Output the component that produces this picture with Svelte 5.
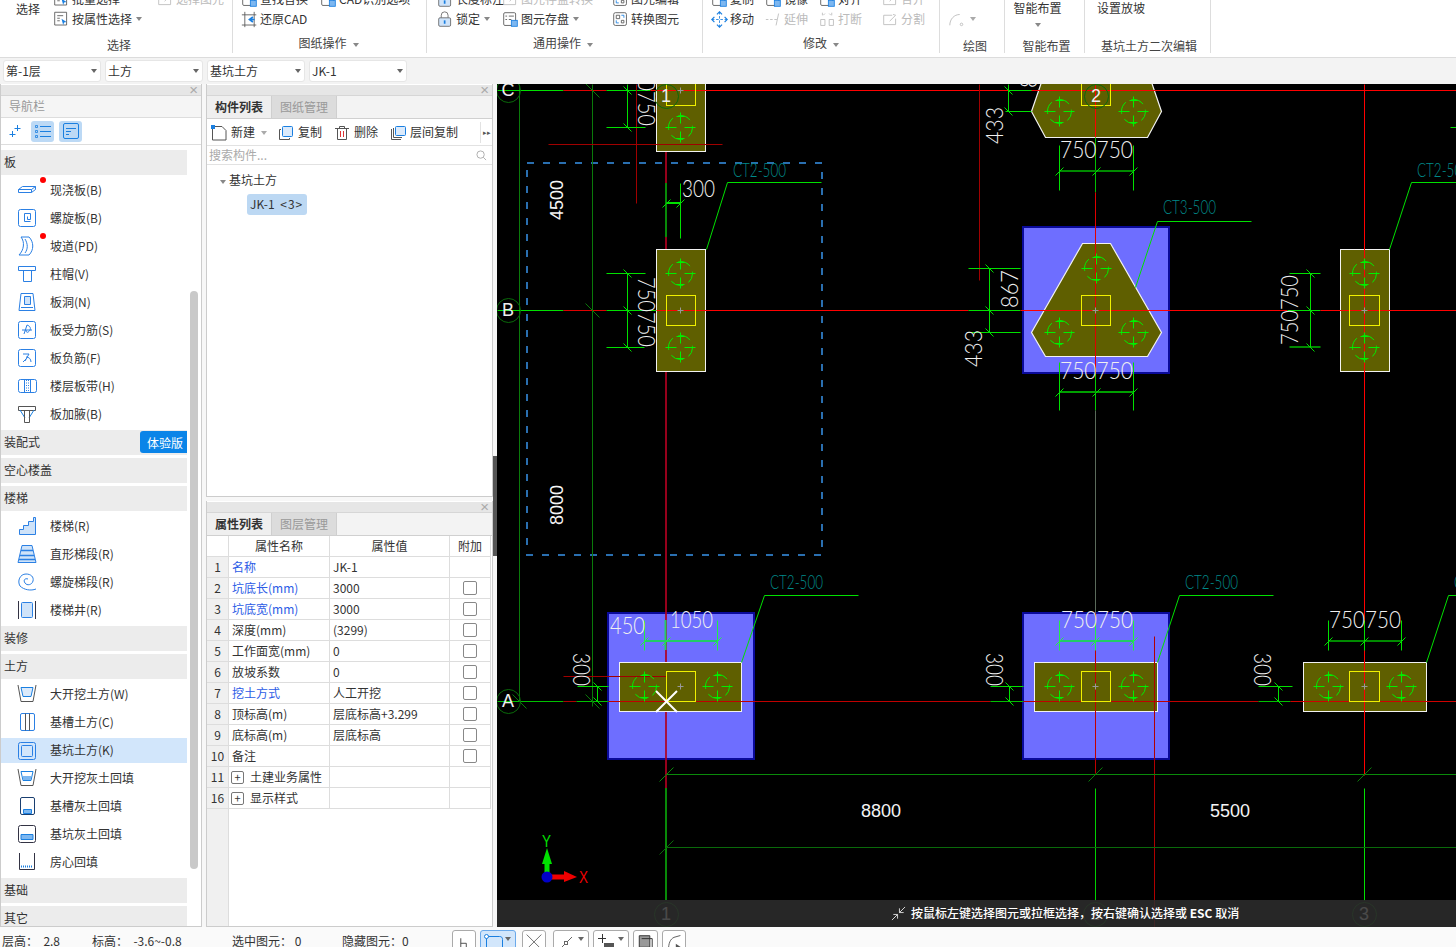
<script>
  const ICONS = {
    pick: '<path d="M2 1.500h14v15H2z" stroke="#555"/><path d="M5 5.500h7M5 8.500h3M5 11.500h3" stroke="#555"/><path d="M10 9l6 4-3 .6-1 3z" fill="#1a7fe0" stroke="none"/>',
    restore: '<path d="M1 4.500h17M1 16.500h17M4.500 1v18M15.500 1v18" stroke="#555"/><path d="M14 7l-4 3 4 3M10 10h6" stroke="#1a7fe0" stroke-width="2"/>',
    lock: '<path d="M5 8V5a4 4 0 0 1 8 0v3" stroke="#666"/><rect x="2" y="8" width="14" height="10" rx="1.5" stroke="#666" fill="#cfe3f9"/><path d="M9 11v4" stroke="#1a7fe0" stroke-width="2"/>',
    save: '<rect x="2" y="2" width="14" height="15" rx="1.5" stroke="#555"/><path d="M4 6h2M8 6h6M4 10h2M8 10h3" stroke="#555"/><rect x="11" y="11" width="7" height="7" fill="#7db7f0" stroke="#1a7fe0"/>',
    convert: '<rect x="2" y="2" width="15" height="15" rx="2" stroke="#555"/><path d="M5 5h4v4H5zM11 11h3v3h-3z" stroke="#555"/><path d="M11 5h3v3M5 11v3h3" stroke="#1a7fe0"/>',
    move: '<path d="M10 1v18M1 10h18" stroke="#1a7fe0" stroke-dasharray="3 2"/><path d="M7 4l3-3 3 3M7 16l3 3 3-3M4 7l-3 3 3 3M16 7l3 3-3 3" stroke="#1a7fe0" stroke-width="1.4"/>',
    extend: '<path d="M1 10h3M6 10h3M11 10h3M16 3l-3 14" stroke="#bbb"/>',
    split: '<path d="M2 10h5v7H2zM12 10h5v7h-5z" stroke="#bbb" /><path d="M4 2v3M15 2v3M7 3l-2 2M12 3l2 2" stroke="#bbb"/>',
    cut: '<path d="M2 5h10M2 5v11h14V9" stroke="#bbb"/><path d="M9 12l7-7M13 4l3 1" stroke="#bbb"/>',
    arc: '<path d="M2 17c0-7 5-12 11-12" stroke="#bbb"/><circle cx="15" cy="16" r="1.4" stroke="#bbb"/>',
    slab: '<path d="M1.500 9.500l4-3h13v3l-4 3h-13zM1.500 9.500h13v3M14.500 9.500l4-3"/>',
    spiral: '<rect x="1.500" y="1.500" width="17" height="17" rx="2"/><path d="M13.500 13.500h-6v-8h6v6h-3v-3"/>',
    ramp: '<path d="M2 19c5-5 6-13 2-18M12 19c5-5 5-13 0-18M4 1h8M2 19h10M8 3c3 5 3 10 0 14" />',
    cap: '<path d="M1.500 2.500h17v4h-17z"/><path d="M6.500 6.500v11h8v-11" stroke="#2b80e4"/>',
    hole: '<path d="M4 1.500h12l2 17H2z"/><path d="M7.500 4.500h6v8h-6z" fill="#cfe3f9"/><path d="M4 15.500h12"/>',
    rebarS: '<rect x="1.500" y="1.500" width="17" height="17" rx="2"/><path d="M5 10h10M10 5c3 1 4 3 3 5s-4 4-4 0M7 14l3-9"/>',
    rebarF: '<rect x="1.500" y="1.500" width="17" height="17" rx="2"/><path d="M6 6h6l-4 7M9 9c3 0 5 2 5 5M6 14l3-3"/>',
    band: '<rect x="1.500" y="3.500" width="18" height="13" rx="2"/><path d="M7.500 3.500v13M13.500 3.500v13" /><path d="M9.500 4v12M11.500 4v12" stroke-dasharray="1 1.5"/>',
    haunch: '<path d="M1.500 2.500h17v4h-17z" stroke="#555"/><path d="M3 6l5 8M17 6l-5 8" stroke="#1a7fe0"/><path d="M7.500 6.500v12h5v-12" stroke="#555"/>',
    stair: '<path d="M2.500 18.500v-5h4v-4h5v-4h5v-4h2v17z" fill="#cfe3f9"/>',
    flight: '<path d="M5 1.500h10l4 17H1z" fill="#cfe3f9"/><path d="M4 6.500h12M3 11.500h14M2 15.500h16" stroke-width="1.6"/>',
    coil: '<path d="M19 17c-5 2-12 1-16-3C0 9 3 2 9 2c5 0 8 3 7 7s-6 5-8 2 0-5 3-4"/>',
    well: '<path d="M1.500 1v18M18.500 1v18" stroke="#334"/><rect x="4.500" y="2.500" width="11" height="15" rx="1" fill="#cfe3f9"/>',
    open: '<path d="M1 1l3 16.500h12L19 1" stroke="#555"/><path d="M4 3.500h12l-2 9H6z" stroke="#1a7fe0" fill="#dbeafb"/>',
    trench: '<rect x="3.500" y="1.500" width="14" height="17" rx="1.5"/><path d="M8.500 1.500v17M12.500 1.500v17" stroke="#555"/>',
    pit: '<rect x="1.500" y="1.500" width="17" height="17" rx="2"/><rect x="4.500" y="4.500" width="11" height="11" rx="1"/>',
    openFill: '<path d="M1 1l3 16.500h12L19 1" stroke="#555"/><path d="M4 3.500h12l-2 9H6z" stroke="#1a7fe0"/><path d="M6 8h8v4H6z" fill="#7db7f0" stroke="none"/>',
    trenchFill: '<rect x="3.500" y="1.500" width="14" height="17" rx="1.5" stroke="#1a3f70"/><path d="M6.500 13.500h8v4h-8z" fill="#7db7f0" stroke="#1a7fe0"/>',
    pitFill: '<rect x="1.500" y="1.500" width="17" height="17" rx="2" stroke="#334"/><path d="M4 10.500h12v5H4z" fill="#7db7f0" stroke="#1a7fe0"/>',
    room: '<path d="M2.500 1v16.500h15V1" stroke="#334"/><path d="M4 14.500h12" stroke="#1a7fe0" stroke-width="2" stroke-dasharray="1 1"/>'
  };

  const sections = [
    { name: '板', items: [
      ['slab', '现浇板(B)', true], ['spiral', '螺旋板(B)'], ['ramp', '坡道(PD)', true], ['cap', '柱帽(V)'], ['hole', '板洞(N)'],
      ['rebarS', '板受力筋(S)'], ['rebarF', '板负筋(F)'], ['band', '楼层板带(H)'], ['haunch', '板加腋(B)']
    ] },
    { name: '装配式', badge: '体验版', items: [] },
    { name: '空心楼盖', items: [] },
    { name: '楼梯', items: [['stair', '楼梯(R)'], ['flight', '直形梯段(R)'], ['coil', '螺旋梯段(R)'], ['well', '楼梯井(R)']] },
    { name: '装修', items: [] },
    { name: '土方', items: [
      ['open', '大开挖土方(W)'], ['trench', '基槽土方(C)'], ['pit', '基坑土方(K)', false, true], ['openFill', '大开挖灰土回填'],
      ['trenchFill', '基槽灰土回填'], ['pitFill', '基坑灰土回填'], ['room', '房心回填']
    ] },
    { name: '基础', items: [] },
    { name: '其它', items: [] }
  ];

  const rows = [
    ['1', '名称', 'JK-1', true, false],
    ['2', '坑底长(mm)', '3000', true, true],
    ['3', '坑底宽(mm)', '3000', true, true],
    ['4', '深度(mm)', '(3299)', false, true],
    ['5', '工作面宽(mm)', '0', false, true],
    ['6', '放坡系数', '0', false, true],
    ['7', '挖土方式', '人工开挖', true, true],
    ['8', '顶标高(m)', '层底标高+3.299', false, true],
    ['9', '底标高(m)', '层底标高', false, true],
    ['10', '备注', '', false, true]
  ];

  // everything below is in page coordinates, the svg viewBox starts at 497,84
  const pile = [
    [680, 127], [680, 273], [680, 347], [1059, 111], [1133, 111], [1096, 268], [1059, 332], [1133, 332],
    [1364, 273], [1364, 347], [644, 686], [717, 686], [1059, 686], [1133, 686], [1328, 686], [1401, 686]
  ];
  const blue = [[1023, 227], [608, 613], [1023, 613]];
  const olive = [
    [656, 70, 49, 81], [656, 249, 49, 122], [1340, 249, 49, 122],
    [619, 662, 122, 49], [1034, 662, 123, 49], [1303, 662, 123, 49]
  ];
  const caps = [[666, 70, 29, 35], [666, 295, 29, 30], [1081, 70, 29, 35], [1081, 295, 29, 30], [1349, 295, 30, 30], [666, 671, 29, 30], [1081, 671, 29, 30], [1349, 671, 30, 30]];
  const hexes = [
    '1045,70 1031,111 1045,137 1147,137 1161,111 1147,70',
    '1082,243 1110,243 1161,332 1147,356 1045,356 1031,332'
  ];
  // x1 y1 x2 y2 colour width
  const lines = [
    [519, 84, 519, 701, '#0a7a0a'], [592, 84, 592, 706, '#0a7a0a'],
    [497, 90, 563, 90, '#00e000'], [563, 90, 606, 90, '#e00000'], [606, 90, 650, 90, '#00e000'], [650, 90, 1456, 90, '#ff0000'],
    [497, 310, 563, 310, '#00e000'], [563, 310, 606, 310, '#e00000'], [606, 310, 656, 310, '#00e000'], [656, 310, 968, 310, '#ff0000'], [968, 310, 1020, 310, '#00e000'], [1020, 310, 1287, 310, '#ff0000'], [1287, 310, 1320, 310, '#00e000'], [1320, 310, 1456, 310, '#ff0000'],
    [497, 701, 563, 701, '#00c000'], [563, 701, 576, 701, '#b00000'], [576, 701, 608, 701, '#00c000'], [608, 701, 990, 701, '#c00000'], [990, 701, 1023, 701, '#00c000'], [1023, 701, 1258, 701, '#c00000'], [1258, 701, 1290, 701, '#00c000'], [1290, 701, 1456, 701, '#d00000'],
    [1095, 84, 1095, 137, '#ff0000'], [1095, 137, 1095, 192, '#00c000'], [1095, 192, 1095, 373, '#e00000'], [1095, 373, 1095, 410, '#00d000'], [1095, 410, 1095, 613, '#5a6a5a'], [1095, 613, 1095, 773, '#c00000'], [1095, 788, 1095, 900, '#00d000'],
    [1364, 84, 1364, 775, '#ff0000'], [1364, 788, 1364, 900, '#00e000'],
    [548, 144, 722, 144, '#a00000'], [636, 84, 636, 203, '#a00000'], [979, 84, 979, 280, '#a00000'], [1154, 636, 1154, 927, '#b00000'], [563, 676, 666, 676, '#a00000'],
    [666, 774, 1456, 774, '#0a8a0a'], [666, 847, 1456, 847, '#0a6a0a'],
    [606, 127, 645, 127, '#00e000'], [627, 84, 627, 127, '#00e000'],
    [606, 273, 645, 273, '#00e000'], [606, 347, 644, 347, '#00e000'], [627, 273, 627, 347, '#00e000'],
    [680, 183, 680, 238, '#00e000'], [666, 203, 680, 203, '#00e000', 2],
    [1059, 171, 1133, 171, '#008a00', 2], [1059, 145, 1059, 190, '#00e000'], [1133, 145, 1133, 190, '#00e000'],
    [1059, 392, 1133, 392, '#00a000', 2], [1059, 362, 1059, 410, '#00e000'], [1133, 362, 1133, 410, '#00e000'],
    [968, 268, 1020, 268, '#00e000'], [968, 332, 1020, 332, '#00e000'], [989, 268, 989, 332, '#00e000'],
    [1008, 90, 1031, 90, '#00e000'], [1005, 111, 1031, 111, '#00e000'], [1008, 84, 1008, 111, '#00e000'],
    [1289, 273, 1320, 273, '#00e000'], [1289, 347, 1320, 347, '#008a00', 2], [1310, 273, 1310, 347, '#00e000'], [1450, 127, 1456, 127, '#00e000'],
    [644, 641, 717, 641, '#22cc66', 2], [644, 620, 644, 650, '#22ee44'], [717, 620, 717, 650, '#22ee44'], [665, 620, 665, 650, '#22cc66', 2],
    [577, 686, 608, 686, '#00e000'], [597, 686, 597, 701, '#00e000'],
    [1059, 641, 1133, 641, '#22cc66', 2], [1059, 620, 1059, 650, '#22ee44'], [1133, 620, 1133, 650, '#22ee44'], [1095, 620, 1095, 650, '#22ee44'],
    [990, 686, 1023, 686, '#00e000'], [1009, 686, 1009, 701, '#00e000'],
    [1328, 641, 1401, 641, '#008a00', 2], [1328, 620, 1328, 650, '#00e000'], [1401, 620, 1401, 650, '#00e000'], [1364, 620, 1364, 650, '#00e000'],
    [1258, 686, 1292, 686, '#00e000'], [1278, 686, 1278, 701, '#00e000']
  ];
  // x y, size, direction (1 for "/", -1 for "\"), colour
  const ticks = [
    [592, 90, 7, -1, '#0a7a0a'], [592, 310, 7, -1, '#0a7a0a'], [592, 701, 7, -1, '#0a7a0a'], [519, 701, 7, -1, '#0a7a0a'],
    [666, 774, 7, 1, '#0a8a0a'], [666, 847, 7, 1, '#0a6a0a'], [1095, 774, 7, 1, '#0a7a0a'], [1364, 774, 7, 1, '#0a7a0a'],
    [627, 90, 4, -1, '#00e000'], [627, 127, 4, -1, '#00e000'], [627, 273, 4, -1, '#00e000'], [627, 310, 4, -1, '#00e000'], [627, 347, 4, -1, '#00e000'],
    [666, 203, 4, 1, '#00e000'], [680, 203, 4, 1, '#00e000'],
    [1059, 171, 4, 1, '#00e000'], [1096, 171, 4, 1, '#00e000'], [1133, 171, 4, 1, '#00e000'],
    [1059, 392, 4, 1, '#00e000'], [1096, 392, 4, 1, '#00e000'], [1133, 392, 4, 1, '#00e000'],
    [989, 268, 4, -1, '#00e000'], [989, 310, 4, -1, '#00e000'], [989, 332, 4, -1, '#00e000'], [1008, 90, 4, -1, '#00e000'], [1008, 111, 4, -1, '#00e000'],
    [1310, 273, 4, -1, '#00e000'], [1310, 310, 4, -1, '#00e000'], [1310, 347, 4, -1, '#00e000'],
    [644, 641, 4, 1, '#22ee44'], [666, 641, 4, 1, '#22ee44'], [717, 641, 4, 1, '#22ee44'], [597, 686, 4, -1, '#00e000'], [597, 701, 4, -1, '#00e000'],
    [1059, 641, 4, 1, '#22ee44'], [1095, 641, 4, 1, '#22ee44'], [1133, 641, 4, 1, '#22ee44'], [1009, 686, 4, -1, '#00e000'], [1009, 701, 4, -1, '#00e000'],
    [1328, 641, 4, 1, '#00e000'], [1364, 641, 4, 1, '#00e000'], [1401, 641, 4, 1, '#00e000'], [1278, 686, 4, -1, '#00e000'], [1278, 701, 4, -1, '#00e000']
  ];
  const leaders = [
    '706,249 727,182 821,182', '1135,287 1157,221 1251,221', '1389,249 1411,182 1456,182',
    '741,662 764,595 858,595', '1157,662 1179,595 1273,595', '1426,662 1448,595 1456,595'
  ];
  const tags = [
    ['CT2-500', 733, 177, 53], ['CT3-500', 1163, 214, 53], ['CT2-500', 1417, 177, 53],
    ['CT2-500', 770, 589, 53], ['CT2-500', 1185, 589, 53], ['CT2-500', 1454, 589, 53]
  ];
  // text, x, baseline y, width, rotation
  const dims = [
    ['300', 682, 197, 33, 0], ['750750', 1060, 158, 73, 0], ['750750', 1060, 379, 73, 0],
    ['750750', 1061, 628, 72, 0], ['750750', 1329, 628, 72, 0], ['450', 610, 634, 35, 0], ['1050', 670, 628, 43, 0],
    ['750750', 638, 56, 70, 90], ['750750', 638, 277, 70, 90],
    ['750750', 1298, 345, 70, -90], ['867', 1018, 308, 38, -90], ['867', 1037, 88, 38, -90],
    ['433', 982, 367, 37, -90], ['433', 1003, 144, 37, -90],
    ['300', 573, 653, 33, 90], ['300', 986, 653, 33, 90], ['300', 1254, 653, 33, 90]
  ];
  const bubbles = [['C', 508, 90], ['B', 508, 310], ['A', 508, 701], ['1', 666, 96], ['2', 1096, 96], ['1', 666, 914], ['2', 1095, 914], ['3', 1364, 914]];
</script>

{#snippet tool(icon, text, cls = '', caret = false)}
  <div class="tool {cls}">
    <svg class="ic" viewBox="0 0 20 20" width="17" height="17">{@html ICONS[icon] || ''}</svg>
    <span>{text}</span>
    {#if caret}<i class="caret"></i>{/if}
  </div>
{/snippet}

<div class="app">
  <header class="ribbon">
    <section class="group g1">
      <div class="cols">
        <div class="big">选择</div>
        <div class="col c1">
          {@render tool('pick', '批量选择')}
          {@render tool('pick', '按属性选择', '', true)}
        </div>
        <div class="col">
          {@render tool('cut', '选择图元', 'off')}
        </div>
      </div>
      <div class="glabel">选择</div>
    </section>
    <section class="group g2">
      <div class="cols">
        <div class="col c2">
          {@render tool('save', '查找替换')}
          {@render tool('restore', '还原CAD')}
        </div>
        <div class="col">
          {@render tool('save', 'CAD识别选项')}
        </div>
      </div>
      <div class="glabel">图纸操作<i class="caret"></i></div>
    </section>
    <section class="group g3">
      <div class="cols">
        <div class="col c3a">
          {@render tool('lock', '长度标注')}
          {@render tool('lock', '锁定', '', true)}
        </div>
        <div class="col c3b">
          {@render tool('cut', '图元存盘转换', 'off')}
          {@render tool('save', '图元存盘', '', true)}
        </div>
        <div class="col">
          {@render tool('convert', '图元编辑')}
          {@render tool('convert', '转换图元')}
        </div>
      </div>
      <div class="glabel">通用操作<i class="caret"></i></div>
    </section>
    <section class="group g4">
      <div class="cols">
        <div class="col c4a">
          {@render tool('save', '复制')}
          {@render tool('move', '移动')}
        </div>
        <div class="col c4b">
          {@render tool('save', '镜像')}
          {@render tool('extend', '延伸', 'off')}
        </div>
        <div class="col c4c">
          {@render tool('save', '对齐')}
          {@render tool('split', '打断', 'off')}
        </div>
        <div class="col">
          {@render tool('cut', '合并', 'off')}
          {@render tool('cut', '分割', 'off')}
        </div>
      </div>
      <div class="glabel">修改<i class="caret"></i></div>
    </section>
    <section class="group g5">
      <div class="cols">
        <div class="col">
          <div class="tool off"></div>
          <div class="tool off">
            <svg class="ic" viewBox="0 0 20 20" width="18" height="18">{@html ICONS.arc}</svg><i class="caret light"></i>
          </div>
        </div>
      </div>
      <div class="glabel">绘图</div>
    </section>
    <section class="group g6">
      <div class="cols">
        <div class="stack">
          <span>智能布置</span>
          <i class="caret"></i>
        </div>
      </div>
      <div class="glabel">智能布置</div>
    </section>
    <section class="group g7">
      <div class="cols">
        <div class="stack">
          <span>设置放坡</span>
        </div>
      </div>
      <div class="glabel">基坑土方二次编辑</div>
    </section>
  </header>

  <div class="selects">
    {#each ['第-1层', '土方', '基坑土方', 'JK-1'] as s}
      <div class="select">{s}<i class="caret dark"></i></div>
    {/each}
  </div>

  <main class="main">
    <aside class="nav">
      <div class="strip"><span class="close">×</span></div>
      <div class="navtitle">导航栏</div>
      <div class="navtools">
        <svg viewBox="0 0 14 14" width="14" height="14" class="addicon"><path d="M9.500 1v6M6.500 4.500h6M4.500 7v6M1.500 10.500h6" fill="none" stroke="#1a7fe0"/></svg>
        <button class="navbtn" aria-label="列表">
          <svg viewBox="0 0 16 14" width="16" height="14"><path d="M5 2.500h11M5 7.500h11M5 12.500h11" stroke="#1a7fe0" fill="none"/><path d="M.5 1.500h2v2h-2zM.5 6.500h2v2h-2zM.5 11.500h2v2h-2z" fill="none" stroke="#1a7fe0" stroke-width=".8"/></svg>
        </button>
        <button class="navbtn" aria-label="详情">
          <svg viewBox="0 0 16 16" width="16" height="16"><rect x=".5" y=".5" width="15" height="15" rx="1.500" fill="none" stroke="#1a7fe0"/><path d="M3 5.500h10M3 8.500h5M3 11.500h3" stroke="#1a7fe0"/></svg>
        </button>
      </div>
      <div class="navlist">
        {#each sections as sec}
          <div class="sec">
            {sec.name}
            {#if sec.badge}<span class="badge">{sec.badge}</span>{/if}
          </div>
          {#if sec.items.length}
            <ul class="items">
              {#each sec.items as [icon, label, dot, active]}
                <li class="item" class:active>
                  <svg class="nicon" viewBox="0 0 20 20" width="20" height="20">{@html ICONS[icon]}</svg>
                  {#if dot}<b class="dot"></b>{/if}
                  <span>{label}</span>
                </li>
              {/each}
            </ul>
          {/if}
        {/each}
        <div class="scroll"></div>
      </div>
    </aside>

    <div class="mid">
      <section class="panel top">
        <div class="strip"><span class="close">×</span></div>
        <div class="tabs">
          <div class="tab on">构件列表</div>
          <div class="tab">图纸管理</div>
        </div>
        <div class="actions">
          <div class="act w1">
            <svg viewBox="0 0 16 16" width="16" height="16"><path d="M3 1.500h8l4 4v9.500H1.500V3" fill="none" stroke="#555"/><path d="M0 0h4v4H0z" fill="#1a7fe0"/></svg>
            新建<i class="caret light"></i>
          </div>
          <div class="act w2">
            <svg viewBox="0 0 16 16" width="16" height="16"><path d="M3 4.500H1.500v10h10V13" fill="none" stroke="#555"/><rect x="4.500" y="1.500" width="10" height="10" rx="1" fill="#dbeafb" stroke="#1a7fe0"/></svg>
            复制
          </div>
          <div class="act w3">
            <svg viewBox="0 0 16 16" width="16" height="16"><path d="M1 3.500h14M5.500 3.500v-2h5v2M3.500 3.500v11h9v-11" fill="none" stroke="#555"/><path d="M6.500 6v6M9.500 6v6" stroke="#d33"/></svg>
            删除
          </div>
          <div class="act">
            <svg viewBox="0 0 16 16" width="16" height="16"><path d="M1.500 4v10.500H11M3.500 3v9.500H12" fill="none" stroke="#555"/><rect x="5.500" y="1.500" width="10" height="9" rx="1" fill="#dbeafb" stroke="#1a7fe0"/></svg>
            层间复制
          </div>
          <span class="more">▸▸</span>
        </div>
        <div class="search">
          搜索构件...
          <svg viewBox="0 0 12 12" width="11" height="11"><circle cx="5" cy="5" r="4" fill="none" stroke="#aaa"/><path d="M8 8l3 3" stroke="#aaa"/></svg>
        </div>
        <div class="tree">
          <div class="tnode"><i class="caret"></i>基坑土方</div>
          <div class="tleaf">JK-1 <small>&lt;3&gt;</small></div>
        </div>
      </section>

      <section class="panel bottom">
        <div class="strip"><span class="close">×</span></div>
        <div class="tabs">
          <div class="tab on">属性列表</div>
          <div class="tab">图层管理</div>
        </div>
        <div class="grid">
          <div class="tr head">
            <div class="no plain"></div>
            <div class="td ctr">属性名称</div>
            <div class="td ctr">属性值</div>
            <div class="td ctr">附加</div>
          </div>
          {#each rows as [no, name, value, link, box]}
            <div class="tr">
              <div class="no">{no}</div>
              <div class="td" class:link>{name}</div>
              <div class="td">{value}</div>
              <div class="td ctr">{#if box}<span class="check"></span>{/if}</div>
            </div>
          {/each}
          {#each [['11', '土建业务属性'], ['16', '显示样式']] as [no, name]}
            <div class="tr">
              <div class="no">{no}</div>
              <div class="td group-name"><span class="plus">+</span>{name}</div>
              <div class="td"></div>
              <div class="td"></div>
            </div>
          {/each}
          <div class="rest"></div>
        </div>
      </section>
      <div class="handle"></div>
    </div>

    <div class="canvas">
      <svg class="draw" viewBox="497 84 959 843" width="959" height="843">
        <rect x="497" y="84" width="959" height="843" fill="#000" />
        {#each blue as [x, y]}
          <rect {x} {y} width="146" height="146" fill="#6e6eff" stroke="#0a0a9a" stroke-width="2" />
        {/each}
        <path d="M666 84V788" stroke="#b00020" stroke-width="2" fill="none" opacity=".85" />
        <path d="M666 183V237M666 788V900" stroke="#088a08" stroke-width="2" fill="none" />
        <path d="M527 163H822V555H527Z" fill="none" stroke="#2a6fb0" stroke-width="2" stroke-dasharray="7 9" />
        <g transform="translate(.5 .5)">
          {#each olive as [x, y, width, height]}
            <rect {x} {y} {width} {height} fill="#5f5f00" stroke="#f2f2f2" />
          {/each}
          {#each hexes as points}
            <polygon {points} fill="#5f5f00" stroke="#f2f2f2" stroke-width="1.200" />
          {/each}
          {#each lines as [x1, y1, x2, y2, stroke, w]}
            <line {x1} y1={y1 - (w ? 0.5 : 0)} {x2} y2={y2 - (w ? 0.5 : 0)} {stroke} stroke-width={w || 1} />
          {/each}
          {#each caps as [x, y, width, height]}
            <rect {x} {y} {width} {height} fill="none" stroke="#f0f000" />
          {/each}
          {#each ticks as [x, y, s, d, stroke]}
            <line x1={x - s} y1={y + s * d} x2={x + s} y2={y - s * d} {stroke} />
          {/each}
          {#each leaders as points}
            <polyline {points} fill="none" stroke="#00e000" />
          {/each}
          {#each pile as [x, y]}
            <g transform="translate({x} {y})" fill="none" stroke="#00f000">
              <circle r="12" stroke-dasharray="13 6" stroke-dashoffset="3" />
              <path d="M-15 0H-4M4 0H15M0 -15V-4M0 4V15M-4 -11H4M-4 11H4" />
            </g>
          {/each}
          {#each [[680, 90], [680, 310], [1095, 310], [1364, 310], [680, 686], [1095, 686], [1364, 686]] as [x, y]}
            <path d="M{x - 3} {y}h6M{x} {y - 3}v6" stroke="#999" />
          {/each}
          {#each bubbles as [t, x, y]}
            <circle cx={x} cy={y} r="12" fill="none" stroke="#0a6a0a" />
          {/each}
        </g>
        {#each bubbles as [t, x, y]}
          <text class="bubble" {x} y={y + 6} text-anchor="middle">{t}</text>
        {/each}
        {#each tags as [t, x, y, w]}
          <text class="tag" {x} {y} textLength={w} lengthAdjust="spacingAndGlyphs">{t}</text>
        {/each}
        {#each dims as [t, x, y, w, r]}
          <text class="dim" {x} {y} textLength={w} lengthAdjust="spacingAndGlyphs" transform="rotate({r} {x} {y})">{t}</text>
        {/each}
        <text class="big-dim" x="881" y="817" text-anchor="middle">8800</text>
        <text class="big-dim" x="1230" y="817" text-anchor="middle">5500</text>
        <text class="big-dim" x="563" y="220" transform="rotate(-90 563 220)">4500</text>
        <text class="big-dim" x="563" y="525" transform="rotate(-90 563 525)">8000</text>

        <path d="M656 691L677 712M677 691L656 712" stroke="#fff" stroke-width="2" />

        <path d="M547 877V860" stroke="#00e000" stroke-width="5" />
        <path d="M542 864L547 848L552 864Z" fill="#00e000" />
        <path d="M547 877H566" stroke="#f00000" stroke-width="5" />
        <path d="M564 871L577 877L564 882Z" fill="#f00000" />
        <circle cx="547" cy="877" r="5.500" fill="#0000c8" />
        <text class="axis" x="542" y="847" fill="#00e000" textLength="9" lengthAdjust="spacingAndGlyphs">Y</text>
        <text class="axis" x="579" y="883" fill="#f00000" textLength="9" lengthAdjust="spacingAndGlyphs">X</text>
      </svg>
      <div class="hint">
        <svg viewBox="0 0 16 16" width="15" height="15"><path d="M15 1L9 7M9 2.500V7h4.500M1 15l6-6M2.500 9H7v4.500" fill="none" stroke="#ddd"/></svg>
        <span>按鼠标左键选择图元或拉框选择，按右键确认选择或 <b>ESC</b> 取消</span>
      </div>
    </div>
  </main>

  <footer class="status">
    <span class="s1">层高：&nbsp;&nbsp;2.8</span>
    <span class="s2">标高：&nbsp;&nbsp;-3.6~-0.8</span>
    <span class="s3">选中图元：&nbsp;0</span>
    <span class="s4">隐藏图元：0</span>
    <div class="snap">
      <div class="sb w24"><svg viewBox="0 0 24 20" width="24" height="20"><path d="M8.500 7v12M8.500 12.500h6V19" fill="none" stroke="#444"/></svg></div>
      <div class="sb w36 sel"><svg viewBox="0 0 24 20" width="24" height="20"><path d="M5.500 5.500h13c2 0 3 1 3 3V20M5.500 6v14" fill="none" stroke="#1a7fe0"/><circle cx="5.500" cy="5.500" r="2" fill="#fff" stroke="#1a7fe0"/></svg><i class="caret dark"></i></div>
      <div class="sb w24 gap3"><svg viewBox="0 0 24 20" width="24" height="20"><path d="M4 3l16 16M20 3L4 19" stroke="#666"/></svg></div>
      <div class="sb w36 gap4"><svg viewBox="0 0 24 20" width="24" height="20"><path d="M6 18L18 6" stroke="#666"/><rect x="10.500" y="10.500" width="3" height="3" fill="#fff" stroke="#666"/></svg><i class="caret dark"></i></div>
      <div class="sb w36"><svg viewBox="0 0 24 20" width="24" height="20"><path d="M4 7.500h8M8.500 3v9" stroke="#333"/><path d="M10 12h10v8H10z" fill="#555"/></svg><i class="caret dark"></i></div>
      <div class="sb w26"><svg viewBox="0 0 24 20" width="24" height="20"><path d="M5.500 4.500h11v12h-11z" fill="#999" stroke="#333"/><path d="M8 7.500h11V20" fill="none" stroke="#333"/></svg></div>
      <div class="sb w24"><svg viewBox="0 0 24 20" width="24" height="20"><path d="M6 20c0-8 2-12 6-14l7-2" fill="none" stroke="#555"/><path d="M14 13l6 4-6 3z" fill="#555"/></svg></div>
    </div>
  </footer>
</div>

<style>
  :global(body) {
    margin: 0;
    background: #fff;
  }
  .app {
    width: 1456px;
    height: 947px;
    overflow: hidden;
    display: grid;
    grid-template-rows: 58px 26px 843px 20px;
    font: 12px/1.2 "Noto Sans CJK SC", "Liberation Sans", sans-serif;
    color: #333;
  }

  /* ribbon */
  .ribbon {
    display: flex;
    background: #fff;
    border-bottom: 1px solid #dcdcdc;
    overflow: hidden;
  }
  .group {
    box-sizing: border-box;
    height: 53px;
    border-right: 1px solid #ddd;
    display: flex;
    flex-direction: column;
  }
  .g1 { width: 233px; }
  .g2 { width: 194px; padding-left: 8px; }
  .g3 { width: 276px; padding-left: 10px; }
  .g4 { width: 237px; padding-left: 8px; }
  .g5 { width: 65px; padding-left: 8px; }
  .g6 { width: 80px; }
  .g7 { width: 126px; }
  .cols {
    display: flex;
    height: 40px;
    margin-top: -11px;
    flex: none;
  }
  .big {
    width: 53px;
    padding-left: 16px;
    box-sizing: border-box;
    line-height: 40px;
  }
  .col { display: flex; flex-direction: column; }
  .c1 { width: 104px; }
  .c2 { width: 79px; }
  .c3a { width: 65px; }
  .c3b { width: 110px; }
  .c4a { width: 54px; }
  .c4b { width: 54px; }
  .c4c { width: 63px; }
  .tool {
    height: 20px;
    display: flex;
    align-items: center;
    gap: 2px;
    white-space: nowrap;
    flex: none;
  }
  .tool .caret { margin-left: 2px; }
  .tool.off { color: #bbb; }
  .ic { fill: none; stroke: #555; flex: none; }
  .stack {
    flex: 1;
    height: 40px;
    display: flex;
    flex-direction: column;
    align-items: center;
    padding-top: 12px;
    box-sizing: border-box;
    gap: 8px;
  }
  .g6 .stack { padding-right: 14px; }
  .g7 .stack { align-items: flex-start; padding-left: 12px; }
  .glabel {
    height: 18px;
    margin-top: 5px;
    line-height: 18px;
    text-align: center;
    color: #444;
  }
  .g1 .glabel { margin-top: 7px; padding-left: 6px; }
  .g2 .glabel { padding-right: 10px; }
  .g3 .glabel { margin-left: -10px; padding-right: 3px; }
  .g4 .glabel { margin-left: -8px; }
  .g5 .glabel { margin-top: 8px; margin-left: -2px; }
  .g6 .glabel { margin-top: 8px; padding-left: 4px; }
  .g7 .glabel { margin-top: 8px; padding-left: 3px; }
  .caret {
    display: inline-block;
    width: 0;
    height: 0;
    margin-left: 6px;
    border: 3.5px solid transparent;
    border-top: 4px solid #888;
    border-bottom: 0;
    vertical-align: middle;
  }
  .caret.light { border-top-color: #aaa; }
  .caret.dark { border-top-color: #666; }
  .stack .caret { margin: 0; }

  /* combo row */
  .selects {
    display: flex;
    gap: 4px;
    align-items: center;
    padding-left: 3px;
    background: #f3f3f3;
  }
  .select {
    box-sizing: border-box;
    width: 98px;
    height: 22px;
    padding: 0 3px 0 2px;
    display: flex;
    align-items: center;
    justify-content: space-between;
    background: #fff;
    border: 1px solid #e6e6e6;
    border-radius: 3px;
  }

  .main { display: flex; background: #f7f7f7; min-height: 0; }

  /* navigation */
  .nav {
    box-sizing: border-box;
    width: 202px;
    margin-right: 4px;
    border: 1px solid #ccc;
    border-top: 0;
    background: #fff;
    display: flex;
    flex-direction: column;
    overflow: hidden;
  }
  .strip {
    box-sizing: border-box;
    height: 11px;
    flex: none;
    background: #e6e6e6;
    border-bottom: 1px solid #d6d6d6;
    margin-top: 1px;
    text-align: right;
    position: relative;
  }
  .close {
    position: absolute;
    right: 3px;
    top: -3px;
    color: #aaa;
    font: 15px/16px "Liberation Sans", sans-serif;
  }
  .navtitle {
    height: 21px;
    line-height: 20px;
    padding-left: 8px;
    flex: none;
    color: #999;
    background: #f5f5f5;
    border-bottom: 1px solid #ddd;
  }
  .navtools {
    height: 27px;
    flex: none;
    border-bottom: 1px solid #ddd;
    display: flex;
    align-items: center;
    gap: 5px;
    padding-left: 7px;
    box-sizing: border-box;
  }
  .addicon { margin-right: 4px; }
  .navbtn {
    width: 23px;
    height: 21px;
    padding: 0;
    border: 0;
    border-radius: 3px;
    background: #bcd9f5;
    display: flex;
    align-items: center;
    justify-content: center;
  }
  .navlist {
    flex: 1;
    position: relative;
    padding-top: 5px;
    overflow: hidden;
  }
  .sec {
    box-sizing: border-box;
    width: 186px;
    height: 25px;
    margin-bottom: 3px;
    padding-left: 3px;
    line-height: 23px;
    background: #ececec;
    position: relative;
  }
  .badge {
    position: absolute;
    right: 0;
    top: 1px;
    width: 47px;
    height: 22px;
    padding-left: 3px;
    box-sizing: border-box;
    line-height: 23px;
    text-align: center;
    color: #fff;
    background: #0a84e8;
    border-radius: 3px 0 0 3px;
  }
  .items {
    list-style: none;
    margin: -2px 0 2px;
    padding: 0;
  }
  .item {
    box-sizing: border-box;
    width: 186px;
    height: 28px;
    display: flex;
    align-items: center;
    padding-left: 16px;
    position: relative;
  }
  .item span { margin-left: 13px; }
  .item.active { height: 25px; margin: 2px 0 1px; background: #d2e6fb; }
  .nicon { fill: none; stroke: #2b80e4; flex: none; }
  .dot {
    position: absolute;
    left: 39px;
    top: 1px;
    width: 6px;
    height: 6px;
    border-radius: 50%;
    background: #f00;
  }
  .scroll {
    position: absolute;
    left: 189px;
    top: 146px;
    width: 8px;
    height: 578px;
    border-radius: 4px;
    background: #c9c9c9;
  }

  /* middle panels */
  .mid {
    width: 287px;
    margin-right: 4px;
    display: flex;
    flex-direction: column;
    gap: 4px;
    position: relative;
    flex: none;
  }
  .panel {
    box-sizing: border-box;
    border: 1px solid #ccc;
    border-top: 0;
    background: #fff;
    display: flex;
    flex-direction: column;
    min-height: 0;
  }
  .panel.top { height: 413px; }
  .panel.bottom { flex: 1; }
  .tabs {
    box-sizing: border-box;
    display: flex;
    height: 23px;
    flex: none;
    background: #f3f3f3;
    border-bottom: 1px solid #d0d0d0;
  }
  .tab {
    box-sizing: border-box;
    width: 65px;
    line-height: 21px;
    text-align: center;
    color: #999;
    background: #dcdcdc;
    border-right: 1px solid #cfcfcf;
  }
  .tab.on { width: 65px; color: #333; font-weight: 700; background: #efefef; }
  .actions {
    height: 27px;
    flex: none;
    display: flex;
    align-items: center;
    padding: 1px 0 0 4px;
    box-sizing: border-box;
    border-bottom: 1px solid #e2e2e2;
    position: relative;
  }
  .act { display: flex; align-items: center; gap: 4px; white-space: nowrap; }
  .act .caret { margin-left: 2px; }
  .w1 { width: 67px; }
  .w2 { width: 56px; }
  .w3 { width: 56px; }
  .more {
    position: absolute;
    right: 0;
    top: 3px;
    width: 11px;
    height: 21px;
    line-height: 21px;
    font-size: 7px;
    color: #555;
    text-align: center;
    border-left: 1px solid #e2e2e2;
  }
  .search {
    box-sizing: border-box;
    height: 19px;
    flex: none;
    padding: 1px 5px 0 2px;
    display: flex;
    align-items: center;
    justify-content: space-between;
    color: #aaa;
    border-bottom: 1px solid #e2e2e2;
  }
  .tree { padding: 6px 0 0 13px; }
  .tnode { height: 19px; line-height: 18px; }
  .tnode .caret { margin: 0 3px 0 0; }
  .tleaf {
    width: 60px;
    height: 21px;
    margin: 4px 0 0 27px;
    padding-left: 3px;
    line-height: 19px;
    box-sizing: border-box;
    background: #bcd8f3;
    border-radius: 3px;
    white-space: nowrap;
  }
  .tleaf small { font-size: 12px; margin-left: 3px; letter-spacing: 1px; }
  .grid {
    flex: 1;
    display: flex;
    flex-direction: column;
    min-height: 0;
  }
  .tr {
    display: grid;
    grid-template-columns: 22px 101px 120px 41px;
    height: 21px;
    flex: none;
  }
  .no {
    box-sizing: border-box;
    line-height: 20px;
    text-align: center;
    background: #f0f0f0;
    border-right: 1px solid #ddd;
    border-bottom: 1px solid #ddd;
  }
  .no.plain { background: #fff; }
  .td {
    box-sizing: border-box;
    padding-left: 3px;
    line-height: 20px;
    border-right: 1px solid #ddd;
    border-bottom: 1px solid #ddd;
    white-space: nowrap;
    overflow: hidden;
  }
  .ctr { padding: 0; text-align: center; }
  .link { color: #2c5ce6; }
  .check {
    display: block;
    box-sizing: border-box;
    width: 14px;
    height: 14px;
    margin: 3px auto 0;
    border: 1px solid #888;
    border-radius: 2px;
    background: #fff;
  }
  .group-name { padding-left: 2px; display: flex; align-items: flex-start; }
  .plus {
    box-sizing: border-box;
    width: 13px;
    height: 13px;
    margin: 4px 6px 0 0;
    line-height: 10px;
    font-size: 11px;
    text-align: center;
    border: 1px solid #777;
    border-radius: 2px;
  }
  .rest {
    flex: 1;
    width: 22px;
    background: #f0f0f0;
    border-right: 1px solid #ddd;
    box-sizing: border-box;
  }
  .handle {
    position: absolute;
    right: -4px;
    top: 372px;
    width: 4px;
    height: 100px;
    background: #555;
  }

  /* drawing */
  .canvas {
    flex: 1;
    position: relative;
    overflow: hidden;
    background: #000;
  }
  .draw { display: block; }
  .tag {
    font: 300 19px Lato, "Liberation Sans", sans-serif;
    fill: #008a8a;
  }
  .dim {
    font: 300 23px Lato, "Liberation Sans", sans-serif;
    fill: #f0f0f0;
  }
  .big-dim {
    font: 18px "Liberation Sans", sans-serif;
    fill: #f4f4f4;
  }
  .bubble {
    font: 18px "Liberation Sans", sans-serif;
    fill: #eee;
  }
  .axis { font: 17px "Liberation Sans", sans-serif; }
  .hint {
    position: absolute;
    left: 0;
    right: 0;
    bottom: 0;
    height: 27px;
    padding-left: 394px;
    box-sizing: border-box;
    display: flex;
    align-items: center;
    gap: 5px;
    color: #fff;
    font-weight: 500;
    background: rgba(45, 45, 45, .86);
  }

  /* status */
  .status {
    position: relative;
    background: #fafafa;
    overflow: hidden;
    display: flex;
    line-height: 27px;
    height: 20px;
  }
  .status span { flex: none; white-space: nowrap; }
  .s1 { width: 92px; padding-left: 2px; box-sizing: border-box; }
  .s2 { width: 140px; }
  .s3 { width: 110px; }
  .s4 { width: 110px; }
  .snap {
    display: flex;
    gap: 4px;
    padding-top: 3px;
  }
  .sb {
    box-sizing: border-box;
    height: 30px;
    display: flex;
    align-items: flex-start;
    border: 1px solid #aaa;
    border-radius: 3px;
    background: #fff;
    flex: none;
    overflow: hidden;
  }
  .sb .caret { margin: 6px 0 0 0; }
  .sel { background: #d2e6fb; border-color: #6aa9ea; }
  .gap3 { margin-left: 2px; }
  .gap4 { margin-left: 3px; }
  .w24 { width: 24px; }
  .w26 { width: 25px; }
  .w36 { width: 36px; }
</style>
